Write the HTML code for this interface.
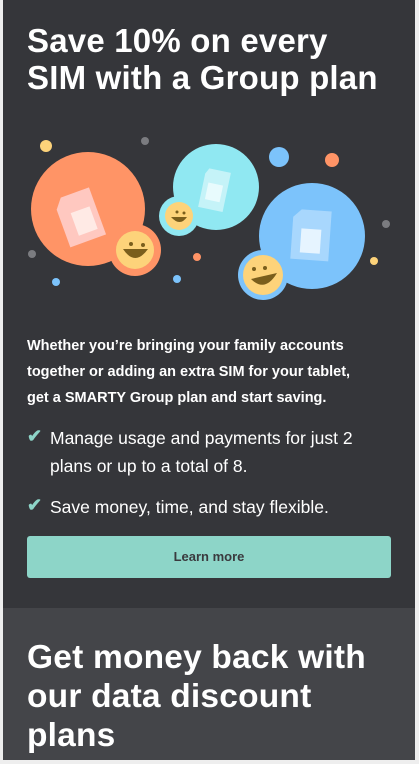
<!DOCTYPE html>
<html><head><meta charset="utf-8"><style>
*{margin:0;padding:0;box-sizing:border-box}
html,body{width:419px;height:764px;overflow:hidden;background:#eeeeee}
body{font-family:"Liberation Sans",sans-serif;position:relative}
.top{position:absolute;left:3px;top:0;width:412px;height:608px;background:#35363a}
.bot{position:absolute;left:3px;top:608px;width:412px;height:152px;background:#444549}
h1{position:absolute;left:27px;color:#fff;font-size:33px;line-height:37px;font-weight:bold;letter-spacing:0.2px;white-space:nowrap}
.p{position:absolute;left:27px;top:333px;color:#fff;font-size:14.5px;line-height:26px;font-weight:bold;white-space:nowrap}
.li{position:absolute;left:50px;color:#fff;font-size:17.5px;line-height:28px;white-space:nowrap}
.ck{position:absolute;left:27px;color:#8dd5c8;font-size:18px;font-weight:bold}
.btn{position:absolute;left:27px;top:536px;width:364px;height:42px;background:#8dd5c8;border-radius:3px;color:#3a3a3e;font-size:13px;font-weight:bold;text-align:center;line-height:42px}
</style></head><body>
<div class="top"></div>
<div class="bot"></div>
<h1 style="top:22px">Save 10% on every<br>SIM with a Group plan</h1>
<svg style="position:absolute;left:0;top:120px" width="419" height="190" viewBox="0 120 419 190">
<circle cx="46" cy="146" r="6" fill="#fdd37a"/>
<circle cx="145" cy="141" r="4" fill="#7b7c80"/>
<circle cx="279" cy="157" r="10" fill="#7cc3fb"/>
<circle cx="332" cy="160" r="7" fill="#ff9466"/>
<circle cx="32" cy="254" r="4" fill="#7b7c80"/>
<circle cx="386" cy="224" r="4" fill="#7b7c80"/>
<circle cx="197" cy="257" r="4" fill="#ff9466"/>
<circle cx="56" cy="282" r="4" fill="#7cc3fb"/>
<circle cx="177" cy="279" r="4" fill="#7cc3fb"/>
<circle cx="374" cy="261" r="4" fill="#fdd37a"/>
<circle cx="88" cy="209" r="57" fill="#ff9466"/>
<g transform="rotate(-20 87 220)"><path d="M70 190 h30 v50 h-38 v-40 z" fill="#ffc8c0"/><rect x="74" y="208" width="20" height="24" fill="#ffeae5"/></g>
<circle cx="135" cy="250" r="26" fill="#ff9466"/>
<circle cx="135" cy="250" r="19" fill="#fdd37a"/>
<circle cx="216" cy="187" r="43" fill="#90e8f2"/>
<g transform="rotate(12 215 190)"><path d="M205 170 h22 v40 h-25 v-34 z" fill="#c5f3f8"/><rect x="207" y="184" width="15" height="17" fill="#e8fbfd"/></g>
<circle cx="179" cy="216" r="20" fill="#90e8f2"/>
<circle cx="179" cy="216" r="14" fill="#fdd37a"/>
<circle cx="312" cy="236" r="53" fill="#7cc3fb"/>
<g transform="rotate(4 310 235)"><path d="M300 210 h30 v50 h-38 v-42 z" fill="#a8d7fd"/><rect x="301" y="229" width="20" height="24" fill="#e6f4ff"/></g>
<circle cx="263" cy="275" r="25" fill="#7cc3fb"/>
<circle cx="263" cy="275" r="20" fill="#fdd37a"/>
<g fill="#7a5e1c">
<circle cx="131" cy="244" r="2"/><circle cx="143" cy="245" r="2"/><path d="M123 249 q12 18 25 0 z"/>
<circle cx="177" cy="212" r="1.5"/><circle cx="184" cy="213" r="1.5"/><path d="M171 217 q9 10 16 0 z"/>
<circle cx="254" cy="269" r="2"/><circle cx="265" cy="268" r="2"/><path d="M251 279 q14 14 26 -6 z"/>
</g>
</svg>
<div class="p">Whether you’re bringing your family accounts<br>together or adding an extra SIM for your tablet,<br>get a SMARTY Group plan and start saving.</div>
<div class="ck" style="top:426px">✔</div>
<div class="li" style="top:424px">Manage usage and payments for just 2<br>plans or up to a total of 8.</div>
<div class="ck" style="top:495px">✔</div>
<div class="li" style="top:493px">Save money, time, and stay flexible.</div>
<div class="btn">Learn more</div>
<h1 style="top:638px;line-height:39px;font-size:33.5px">Get money back with<br>our data discount<br>plans</h1>
</body></html>
